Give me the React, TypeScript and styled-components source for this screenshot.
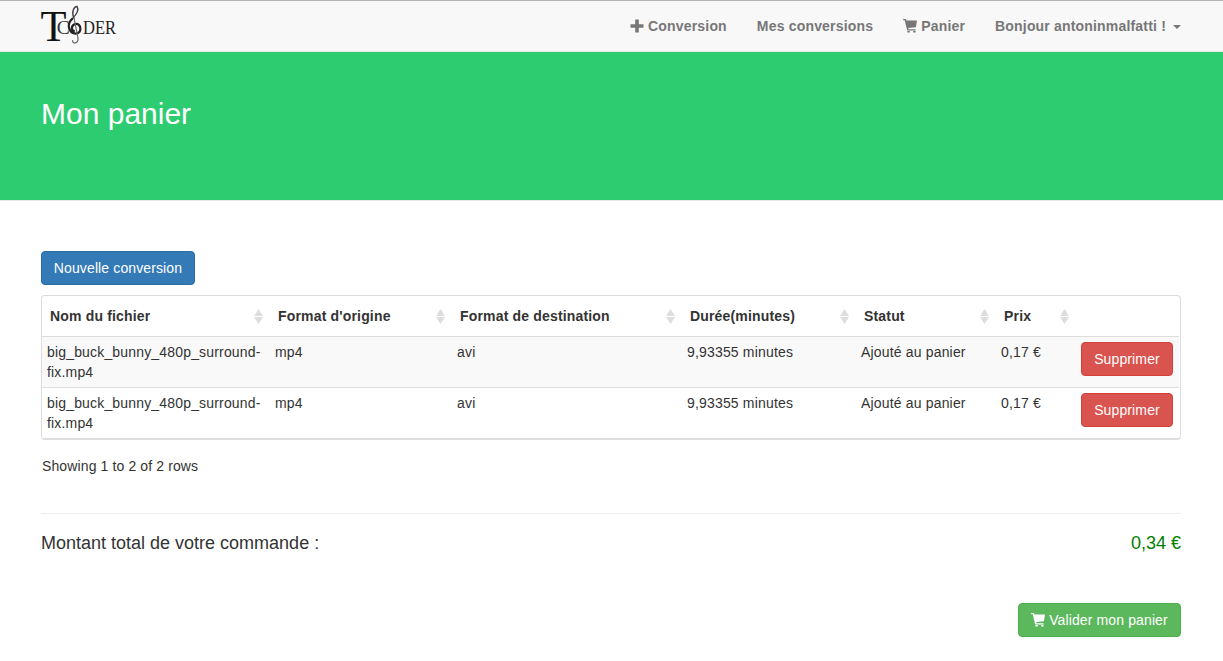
import React from "react";
import styled, { createGlobalStyle } from "styled-components";

const GlobalStyle = createGlobalStyle`
  *, *::before, *::after { box-sizing: border-box; }
  body {
    margin: 0;
    background: #fff;
    color: #333;
    font: 14px/20px "Liberation Sans", Arial, sans-serif;
  }
`;

const Navbar = styled.nav`
  height: 52px;
  padding: 0 42px 0 41px;
  display: flex;
  justify-content: space-between;
  background: #f8f8f8;
  border-top: 1px solid #b4b4b4;
  border-bottom: 1px solid #e7e7e7;
`;

const Logo = styled.svg`
  display: block;
  width: 76px;
  height: 42px;
  margin-top: 3px;
  overflow: visible;
`;

const NavLinks = styled.div`
  display: flex;
  gap: 30px;
  padding-top: 15px;
`;

const NavLink = styled.a`
  display: flex;
  align-items: center;
  height: 20px;
  color: #777;
  font-weight: bold;
  white-space: nowrap;
  letter-spacing: 0.18px;
`;

const Glyph = styled.svg`
  display: block;
  width: 14px;
  height: 14px;
  margin-right: 4px;
  flex: none;
`;

const Caret = styled.span`
  margin-left: 7px;
  margin-top: 2px;
  border-top: 4px solid #777;
  border-left: 4px solid transparent;
  border-right: 4px solid transparent;
`;

const Hero = styled.header`
  height: 149px;
  padding: 45px 41px 0;
  background: #2ecc71;
  border-bottom: 1px solid #e7e7e7;
`;

const Title = styled.h1`
  margin: 0;
  color: #fff;
  font-size: 30px;
  font-weight: normal;
  line-height: 33px;
`;

const Main = styled.main`
  padding: 50px 42px 24px 41px;
`;

const tones = {
  primary: ["#337ab7", "#2e6da4"],
  danger: ["#d9534f", "#d43f3a"],
  success: ["#5cb85c", "#4cae4c"],
};

const Button = styled.button<{ $tone: keyof typeof tones; $width: number }>`
  display: flex;
  align-items: center;
  justify-content: center;
  width: ${(p) => p.$width}px;
  height: 34px;
  padding: 0;
  border: 1px solid ${(p) => tones[p.$tone][1]};
  border-radius: 4px;
  background: ${(p) => tones[p.$tone][0]};
  color: #fff;
  font: inherit;
  letter-spacing: 0.12px;
  white-space: nowrap;
`;

const TableFrame = styled.div`
  margin-top: 10px;
  padding-right: 1px;
  border: 1px solid #ddd;
  border-bottom-width: 2px;
  border-radius: 4px;
`;

const Table = styled.table`
  width: 1137px;
  table-layout: fixed;
  border-collapse: separate;
  border-spacing: 0;
`;

const HeadCell = styled.th`
  height: 40px;
  padding: 0 7px 0 8px;
  text-align: left;
  letter-spacing: 0.17px;
`;

const HeadLabel = styled.div`
  display: flex;
  align-items: center;
  justify-content: space-between;
  white-space: nowrap;
`;

const SortMark = styled.svg`
  width: 9px;
  height: 15px;
`;

const Row = styled.tr<{ $striped: boolean }>`
  background: ${(p) => (p.$striped ? "#f9f9f9" : "#fff")};
`;

const Cell = styled.td`
  height: 51px;
  padding: 5px;
  border-top: 1px solid #ddd;
  vertical-align: top;
  letter-spacing: 0.17px;
`;

const PageInfo = styled.div`
  margin: 16px 0 37px 1px;
  letter-spacing: 0.12px;
`;

const Total = styled.div`
  display: flex;
  justify-content: space-between;
  height: 90px;
  padding-top: 19px;
  border-top: 1px solid #eee;
  font-size: 18px;
`;

const Amount = styled.span`
  color: green;
`;

const Actions = styled.div`
  display: flex;
  justify-content: flex-end;
`;

const Cart = () => (
  <Glyph viewBox="0 0 14 14" fill="currentColor">
    <path d="M.2 0h2.6l.6 1.6H14L12.9 8.2 5.2 9l.3 1.2h7.1v1.2H4.2L1.7 1.2H.2z" />
    <path d="M4.4 12h2.4v1.6H4.4zM10.200 12h2.4v1.600h-2.4z" />
  </Glyph>
);

const Plus = () => (
  <Glyph viewBox="0 0 14 14" fill="currentColor">
    <path d="M5.2.5h3.6v4.7h4.7v3.6H8.8v4.7H5.2V8.8H.5V5.2h4.7z" />
  </Glyph>
);

const Brand = () => (
  <Logo viewBox="0 0 76 42" fontFamily="Liberation Serif, serif" fill="#111">
    <text x="-.5" y="37" fontSize="44" textLength="26" lengthAdjust="spacingAndGlyphs">T</text>
    <text x="15.8" y="30" fontSize="19" textLength="13" lengthAdjust="spacingAndGlyphs" fill="#333">C</text>
    <text x="42" y="30" fontSize="19.5" textLength="33" lengthAdjust="spacingAndGlyphs" fill="#222">DER</text>
    <g fill="none" stroke="#444" strokeLinecap="round">
      <path d="M33 14C30 8 33 2.500 36 2.500C38.500 6 35 11 31 15" strokeWidth="1.400" />
      <path d="M31 15C25 21 28 30 35.500 29.500C41.500 28 40 19 34.500 20C30 21 30 26 33 27" strokeWidth="2.200" stroke="#222" />
      <path d="M33 14L37 34C37.500 40 31.500 40 31.500 36.500" strokeWidth="1.200" stroke="#666" />
    </g>
  </Logo>
);

const columns = [
  { label: "Nom du fichier", width: 228 },
  { label: "Format d'origine", width: 182 },
  { label: "Format de destination", width: 230 },
  { label: "Durée(minutes)", width: 174 },
  { label: "Statut", width: 140 },
  { label: "Prix", width: 80 },
  { label: "", width: 103 },
];

const file = ["big_buck_bunny_480p_surround-fix.mp4", "mp4", "avi", "9,93355 minutes", "Ajouté au panier", "0,17 €"];
const rows = [file, file];

export default function App() {
  return (
    <>
      <GlobalStyle />
      <Navbar>
        <Brand />
        <NavLinks>
          <NavLink><Plus />Conversion</NavLink>
          <NavLink>Mes conversions</NavLink>
          <NavLink><Cart />Panier</NavLink>
          <NavLink>Bonjour antoninmalfatti !<Caret /></NavLink>
        </NavLinks>
      </Navbar>
      <Hero>
        <Title>Mon panier</Title>
      </Hero>
      <Main>
        <Button $tone="primary" $width={154}>Nouvelle conversion</Button>
        <TableFrame>
          <Table>
            <colgroup>
              {columns.map((c, i) => <col key={i} width={c.width} />)}
            </colgroup>
            <thead>
              <tr>
                {columns.map((c, i) => (
                  <HeadCell key={i}>
                    {c.label && (
                      <HeadLabel>
                        {c.label}
                        <SortMark viewBox="0 0 9 15" fill="#ddd">
                          <path d="M4.5 0L9 7H0zM0 8H9L4.5 15z" />
                        </SortMark>
                      </HeadLabel>
                    )}
                  </HeadCell>
                ))}
              </tr>
            </thead>
            <tbody>
              {rows.map((row, r) => (
                <Row key={r} $striped={r % 2 === 0}>
                  {row.map((value, i) => <Cell key={i}>{value}</Cell>)}
                  <Cell><Button $tone="danger" $width={92}>Supprimer</Button></Cell>
                </Row>
              ))}
            </tbody>
          </Table>
        </TableFrame>
        <PageInfo>Showing 1 to 2 of 2 rows</PageInfo>
        <Total>
          <span>Montant total de votre commande :</span>
          <Amount>0,34 €</Amount>
        </Total>
        <Actions>
          <Button $tone="success" $width={163}><Cart />Valider mon panier</Button>
        </Actions>
      </Main>
    </>
  );
}
